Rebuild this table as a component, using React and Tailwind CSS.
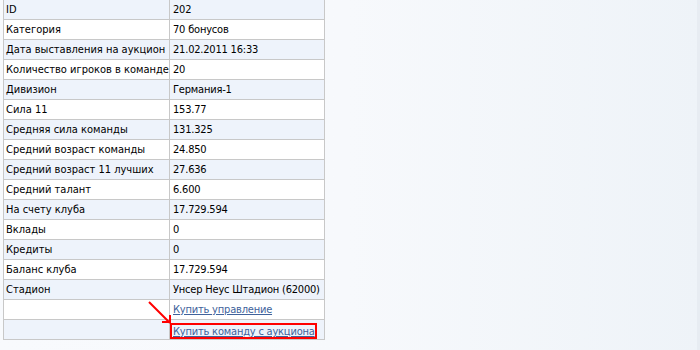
import React from 'react';

const rows = [
  ['ID', '202'],
  ['Категория', '70 бонусов'],
  ['Дата выставления на аукцион', '21.02.2011 16:33'],
  ['Количество игроков в команде', '20'],
  ['Дивизион', 'Германия-1'],
  ['Сила 11', '153.77'],
  ['Средняя сила команды', '131.325'],
  ['Средний возраст команды', '24.850'],
  ['Средний возраст 11 лучших', '27.636'],
  ['Средний талант', '6.600'],
  ['На счету клуба', '17.729.594'],
  ['Вклады', '0'],
  ['Кредиты', '0'],
  ['Баланс клуба', '17.729.594'],
  ['Стадион', 'Унсер Неус Штадион (62000)'],
];

const Row = ({ i, children }) => (
  <div
    className={`grid grid-cols-[166px_155px] h-[20px] border-b border-[#c8c8c8] ${
      i % 2 === 0 ? 'bg-[#eef3fb]' : 'bg-white'
    }`}
  >
    {children}
  </div>
);

const Cell = ({ first, children }) => (
  <div
    className={`h-[19px] leading-[20px] whitespace-nowrap ${
      first ? 'pl-[2px] border-r border-[#c8c8c8]' : 'pl-[3px] tracking-[-0.2px]'
    }`}
  >
    {children}
  </div>
);

export default function App() {
  return (
    <div
      className="w-[700px] h-[350px] overflow-hidden bg-gradient-to-r from-[#f8fafd] via-[#f7f9fc] to-[#eef3f8] relative"
      style={{ fontFamily: '"DejaVu Sans Condensed", "Liberation Sans", Tahoma, sans-serif' }}
    >
      <div className="absolute right-0 top-0 w-[3px] h-full bg-[#e7ecf2]" />
      <div className="ml-[3px] w-[322px] border-l border-r border-[#c8c8c8] text-[11px] text-black">
        {rows.map(([k, v], i) => (
          <Row key={k} i={i}>
            <Cell first>{k}</Cell>
            <Cell>{v}</Cell>
          </Row>
        ))}
        <Row i={15}>
          <Cell first></Cell>
          <Cell>
            <a href="#" className="text-[#40629b] underline">Купить управление</a>
          </Cell>
        </Row>
        <Row i={16}>
          <Cell first></Cell>
          <div className="h-[19px] relative">
            <span className="absolute left-0 top-[3px] h-[16px] w-[147px] border-2 border-[#ff0000] leading-[13px] pl-[1px] whitespace-nowrap tracking-[-0.2px]">
              <a href="#" className="text-[#40629b] underline">Купить команду с аукциона</a>
            </span>
          </div>
        </Row>
      </div>
      <svg className="absolute left-[147px] top-[300px]" width="26" height="26" viewBox="0 0 26 26">
        <path d="M2 2 L23 23 M15 22 L23 22 L23 15" stroke="#ff0000" strokeWidth="2" fill="none" />
      </svg>
    </div>
  );
}
